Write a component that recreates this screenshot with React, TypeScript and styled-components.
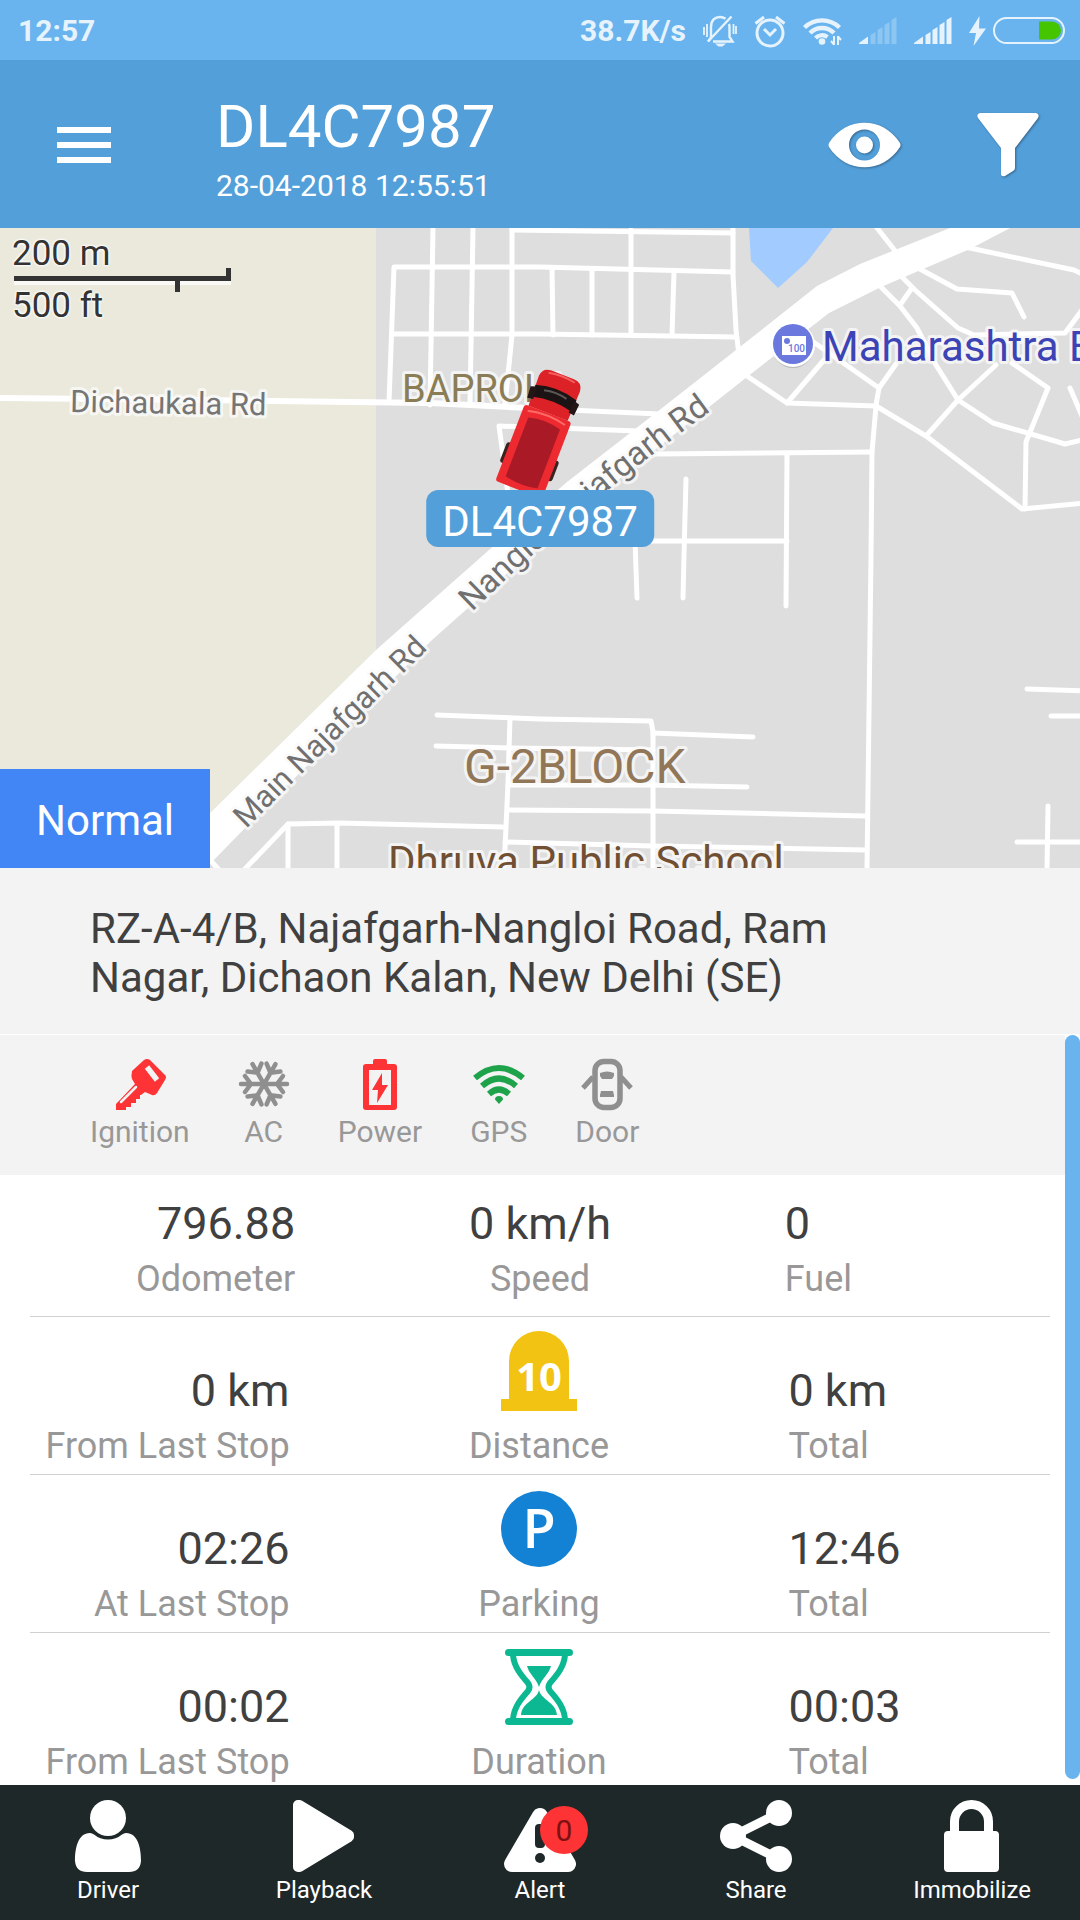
import React from "react";
import styled, { createGlobalStyle } from "styled-components";

const GlobalStyle = createGlobalStyle`
  *, *::before, *::after { box-sizing: border-box; }
  body { margin: 0; background: #ffffff; font-family: Roboto, "Noto Sans", sans-serif; }
  button { margin: 0; padding: 0; border: 0; background: none; color: inherit; font: inherit; cursor: pointer; }
  svg { display: block; flex: none; overflow: visible; }
`;

const Page = styled.div`
  display: flex;
  flex-direction: column;
  min-height: 100vh;
`;

/* ---------- status bar ---------- */

const StatusBar = styled.div`
  display: flex;
  align-items: center;
  justify-content: space-between;
  height: 60px;
  padding: 1px 15px 0 18px;
  background: #69b4ee;
  color: #e6f3fd;
  font-size: 30px;
  font-weight: 700;
  line-height: 36px;
`;

const StatusItems = styled.div`
  display: flex;
  align-items: center;
  gap: 17px;
`;

const PowerItems = styled.div`
  display: flex;
  align-items: center;
  gap: 7px;
`;

const SilentIcon = () => (
  <svg width="34" height="32" viewBox="0 0 34 32" fill="none" stroke="#e6f3fd" strokeWidth="2.4">
    <path d="M8 22.5V12C8 5 12 2 17 2c2 0 4 .6 5.500 1.800M26 9c.4 1 .5 2 .5 3.500V22l3 4.500H10M8 22.500l-3 4" />
    <path d="M28.500 1.500L5 26.500" />
    <path d="M12 28.500h11l-3.500 3h-4z" fill="#e6f3fd" stroke="none" />
    <path d="M1 12v8M4 9v13M30.500 9v10M33 11v8" strokeWidth="1.800" />
  </svg>
);

const AlarmIcon = () => (
  <svg width="32" height="32" viewBox="0 0 32 32" fill="none" stroke="#e6f3fd" strokeWidth="3">
    <circle cx="16" cy="18" r="13" />
    <path d="M10 14l6 6 6-6M1.500 8.500L10 2M30.500 8.500L22 2" />
  </svg>
);

const WifiIcon = () => (
  <svg width="39" height="28" viewBox="0 0 39 28" fill="none" stroke="#e6f3fd" strokeWidth="4.400">
    <path d="M1.500 10.500a25 25 0 0 1 35 0" />
    <path d="M7 16a17 17 0 0 1 24 0" />
    <path d="M12.500 21a9.500 9.500 0 0 1 12-1" />
    <circle cx="19" cy="24.500" r="3.300" fill="#e6f3fd" stroke="none" />
    <path d="M31 19v9M28 24l3 3.500M35 28v-9M38 23l-3-3.500" strokeWidth="2" />
  </svg>
);

const SignalIcon = ({ level }: { level: number }) => (
  <svg width="38" height="26" viewBox="0 0 38 26" fill="#e6f3fd">
    <path d="M0 25l9-6.500V26H0z" />
    {[0, 1, 2, 3].map((bar) => {
      const x = 11.5 + bar * 7;
      const top = 15 - bar * 5;
      return <path key={bar} d={`M${x} ${top + 2}l5-3V26h-5z`} opacity={bar < level ? 1 : 0.3} />;
    })}
  </svg>
);

const ChargeIcon = () => (
  <svg width="17" height="30" viewBox="0 0 17 30" fill="#e6f3fd">
    <path d="M10.500 0L0 17h7L4.500 30 17 12.500h-7z" />
  </svg>
);

const BatteryIcon = () => (
  <svg width="72" height="27" viewBox="0 0 72 27">
    <rect x="1" y="1" width="70" height="25" rx="12.500" fill="none" stroke="#e6f3fd" strokeWidth="2" />
    <path d="M46 4.500h13a9 9 0 0 1 0 18H46z" fill="#45c400" />
  </svg>
);

/* ---------- header ---------- */

const Header = styled.header`
  display: flex;
  align-items: center;
  padding: 26px 41px 24px 57px;
  background: #539fd9;
  color: #ffffff;
`;

const HeaderButton = styled.button`
  display: flex;
  align-items: center;
  min-height: 112px;
`;

const HeaderTitle = styled.div`
  flex: 1;
  min-width: 0;
  margin-left: 105px;
  padding-top: 6px;
`;

const VehicleName = styled.h1`
  margin: 0 0 6px;
  font-size: 60px;
  font-weight: 400;
  line-height: 70px;
`;

const Timestamp = styled.div`
  font-size: 30px;
  line-height: 36px;
`;

const HeaderActions = styled.div`
  display: flex;
  gap: 76px;
`;

const IconShadow = styled.svg`
  filter: drop-shadow(1px 1px 1px rgba(0, 0, 0, 0.35));
`;

/* ---------- map ---------- */

const MapArea = styled.section`
  position: relative;
  flex: 1 0 320px;
  overflow: hidden;
  background: #dedede;
`;

const MapDrawing = styled.svg`
  position: absolute;
  inset: 0;
  width: 100%;
  height: 100%;
  font-family: Roboto, sans-serif;
`;

const MapText = styled.text<{ $size: number; $tone: string }>`
  font-size: ${(p) => p.$size}px;
  fill: ${(p) => p.$tone};
  stroke: rgba(250, 250, 250, 0.8);
  stroke-width: 6px;
  stroke-linejoin: round;
  paint-order: stroke;
`;

const MapScale = styled.div`
  position: absolute;
  top: 5px;
  left: 12px;
  color: #333333;
  font-size: 35px;
  line-height: 42px;
  text-shadow: 0 0 3px #ffffff, 0 0 3px #ffffff, 0 0 3px #ffffff;
`;

const MarkerLabel = styled.button`
  position: absolute;
  top: 41%;
  left: 50%;
  padding: 7px 16px 0;
  border-radius: 12px;
  background: #539fd9;
  color: #ffffff;
  font-size: 42px;
  line-height: 50px;
  transform: translateX(-50%);
`;

const MapMode = styled.button`
  position: absolute;
  bottom: 0;
  left: 0;
  padding: 27px 36px 22px;
  background: #4285f5;
  color: #ffffff;
  font-size: 42px;
  line-height: 50px;
`;

const streets = [
  "M433 228L430 405",
  "M473 228L470 405",
  "M512 228V335L508 375L505 404",
  "M389 402L394 267L540 267L733 272",
  "M393 334H540L735 337",
  "M512 230L733 233",
  "M733 228V275L736 330L739 355",
  "M631 230V335",
  "M552 268L553 335",
  "M592 270V335",
  "M674 272L672 335",
  "M874 224L896 252",
  "M965 247L1074 270L1084 275",
  "M918 268L957 289L1012 293L1024 317",
  "M899 274L915 290L958 328L974 335L1065 333L1082 310",
  "M912 288L900 305",
  "M878 284L900 306L917 328L936 365L958 400L993 423L1065 444L1082 440",
  "M812 341L879 388L876 405",
  "M896 364L879 388",
  "M744 374L787 403L876 406L926 436L1022 509L1084 503",
  "M787 403L824 360",
  "M926 436L958 400L996 365",
  "M1012 363L1048 388L1026 442L1025 509",
  "M1070 388L1082 416",
  "M876 406L872 452L871 555L867 870",
  "M569 410L659 414",
  "M508 495L505 470L499 426L638 431",
  "M655 454L872 452",
  "M686 479L684 555L683 598",
  "M787 455L786 606",
  "M635 540L637 598",
  "M600 541H787",
  "M1027 689L1084 691",
  "M1051 716H1084",
  "M1048 806L1047 870",
  "M1017 842H1084",
  "M437 715L540 719L651 721L653 732V870",
  "M653 733L753 737",
  "M436 746L510 748L653 750",
  "M510 718L508 783L504 870",
  "M508 785L653 785L747 787",
  "M508 810L653 811L865 816",
  "M505 842L653 846L866 850",
  "M244 870L288 824L339 823L503 827",
  "M288 824V870",
  "M337 824V870",
  "M210 860L221 872",
];

const Truck = () => (
  <g transform="translate(547 416) rotate(21)">
    <rect x="-28" y="38" width="8" height="22" rx="3" fill="#3a2320" />
    <rect x="20" y="38" width="8" height="22" rx="3" fill="#3a2320" />
    <rect x="-25" y="-3" width="50" height="82" rx="3" fill="#ed2a30" />
    <path d="M-17 8Q0 3 17 8V71Q0 75-17 71Z" fill="#aa1a26" />
    <path d="M-20 2Q0-3 20 2" stroke="#ff6a66" strokeWidth="2" fill="none" />
    <path d="M-21-3L-22-35Q-21-44-12-44H12Q21-44 22-35L21-3Z" fill="#dc2127" />
    <path d="M-14-41Q0-44 14-41" stroke="#f4605f" strokeWidth="2" fill="none" />
    <path d="M-22-25Q0-32 22-25L20-13Q0-18-20-13Z" fill="#1c1414" />
    <path d="M-26-22l6-2 1 13-6 1zM26-22l-6-2-1 13 6 1z" fill="#241616" />
    <path d="M-12-23Q0-26 12-23" stroke="#5d5858" strokeWidth="2" fill="none" />
  </g>
);

const CityMap = () => (
  <MapDrawing viewBox="0 228 1080 640" preserveAspectRatio="xMidYMid slice" role="img" aria-label="Map around the vehicle">
    <defs>
      <path id="nangloi-road" d="M472 612Q586 500 726 400" />
      <path id="main-road" d="M246 829L440 637" />
    </defs>
    <rect x="0" y="228" width="1080" height="640" fill="#dedede" />
    <path d="M-1000 228H376V650L210 813V870H-1000Z" fill="#eae9dc" />
    <path d="M749 228L751 261L778 288L807 262L833 228Z" fill="#a2cbff" />
    <path d="M-4 398L200 400L430 403L569 410" fill="none" stroke="#ffffff" strokeWidth="6" />
    <g fill="none" stroke="#ffffff" strokeWidth="5" strokeLinecap="round" strokeLinejoin="round">
      {streets.map((street) => (
        <path key={street} d={street} />
      ))}
    </g>
    <path
      d="M955 226L860 264L817 286L736 350L657 412L567 482L489 550L376 650L208 815V866L246 827L432 640L540 544L652 452L747 377L829 313L881 287L970 249L1014 226Z"
      fill="#ffffff"
    />
    <MapText $size={31} $tone="#757575" x="70" y="412" transform="rotate(1 70 412)">Dichaukala Rd</MapText>
    <MapText $size={38} $tone="#8a7d55" x="402" y="402">BAPROLA</MapText>
    <MapText $size={42} $tone="#3c43b5" x="822" y="361">Maharashtra Bank</MapText>
    <MapText $size={48} $tone="#917758" x="464" y="783">G-2BLOCK</MapText>
    <MapText $size={42} $tone="#704f33" x="388" y="876">Dhruva Public School</MapText>
    <MapText $size={33} $tone="#707070">
      <textPath href="#nangloi-road">Nangloi Najafgarh Rd</textPath>
    </MapText>
    <MapText $size={31} $tone="#707070">
      <textPath href="#main-road">Main Najafgarh Rd</textPath>
    </MapText>
    <circle cx="793" cy="347" r="21" fill="#b9b9b9" />
    <circle cx="793" cy="345" r="22" fill="#ffffff" />
    <circle cx="793" cy="344" r="20" fill="#6b79df" />
    <rect x="782" y="336" width="24" height="19" fill="#ffffff" />
    <circle cx="787" cy="341" r="3" fill="#6b79df" />
    <text x="788" y="352" fontSize="10" fontWeight="500" fill="#6b79df">100</text>
    <Truck />
  </MapDrawing>
);

/* ---------- details ---------- */

const Address = styled.address`
  padding: 36px 180px 32px 90px;
  border-bottom: 1px solid #ffffff;
  background: #f3f3f3;
  color: #404040;
  font-size: 42px;
  font-style: normal;
  line-height: 49px;
`;

const Details = styled.section`
  display: grid;
  grid-template-columns: minmax(0, 1fr) 15px;
  background: #ffffff;
`;

const ScrollThumb = styled.div`
  margin-bottom: 6px;
  border-radius: 8px;
  background: #69b4ee;
`;

const Sensors = styled.div`
  display: flex;
  flex-wrap: wrap;
  gap: 48px;
  padding: 24px 24px 25px 90px;
  background: #f3f3f3;
`;

const Sensor = styled.div`
  display: flex;
  flex-direction: column;
  align-items: center;
  gap: 3px;
  color: #999898;
  font-size: 30px;
  line-height: 36px;
`;

const Metrics = styled.div`
  margin: 0 15px 0 30px;
`;

const MetricRow = styled.div<{ $trip?: boolean }>`
  display: grid;
  grid-template-columns: minmax(0, 1fr) ${(p) => (p.$trip ? "49%" : "48%")} minmax(0, 1fr);
  align-items: end;
  padding: ${(p) => (p.$trip ? "14px 2px 5px 0" : "19px 0 14px")};
  border-bottom: 1px solid #d0d0d0;

  &:last-child {
    padding-bottom: 0;
    border-bottom: 0;
  }
`;

const Metric = styled.div<{ $align: "left" | "center" | "right" }>`
  display: flex;
  flex-direction: column;
  align-items: ${(p) => (p.$align === "left" ? "flex-start" : p.$align === "right" ? "flex-end" : "center")};
  gap: 2px;
  white-space: nowrap;
`;

const MetricValue = styled.div`
  color: #404040;
  font-size: 45px;
  line-height: 60px;
`;

const MetricLabel = styled.div`
  color: #999898;
  font-size: 36px;
  line-height: 46px;
`;

const MetricIcon = styled.div`
  height: 90px;
`;

const RED = "#fe3335";
const GREY = "#8f8f8f";

const KeyIcon = () => (
  <svg width="52" height="52" viewBox="0 0 52 52">
    <path
      d="M30 1Q33-1 36 1L51 16Q53 18 51 21L43 34Q41 37 38 36L31 33L27 36H26V40H22V44H17V48H12V51H2V45L21 25L18 20Q17 17 18 12Z"
      fill={RED}
    />
    <path d="M33 8L43 21" stroke="#f3f3f3" strokeWidth="5.500" />
    <path d="M22 28L7 43" stroke="#f3f3f3" strokeWidth="2.500" strokeLinecap="round" />
  </svg>
);

const SnowIcon = () => (
  <svg width="52" height="52" viewBox="-26 -25 52 52" fill="none" stroke={GREY} strokeWidth="4.500" strokeLinecap="round">
    {[0, 60, 120, 180, 240, 300].map((angle) => (
      <path key={angle} d="M0 0H23M13 0L19-8M13 0L19 8" transform={`rotate(${angle})`} />
    ))}
  </svg>
);

const BatteryCellIcon = () => (
  <svg width="52" height="52" viewBox="0 0 52 52">
    <path
      d="M19 5V2Q19 0 21 0H31Q33 0 33 2V5H40Q43 5 43 8V48Q43 51 40 51H12Q9 51 9 48V8Q9 5 12 5ZM15 11V46H37V11Z"
      fill={RED}
      fillRule="evenodd"
    />
    <path d="M28 14L18 31H24L23 44L34 26H28Z" fill={RED} />
  </svg>
);

const GpsIcon = () => (
  <svg width="52" height="52" viewBox="0 0 52 52" fill="none" stroke="#1fa34a" strokeWidth="6">
    <path d="M2 19Q26-1 50 19" />
    <path d="M9 27Q26 12 43 27" />
    <path d="M16 35Q26 26 36 35" />
    <path d="M26 45L22 40.500Q22 37 26 37Q30 37 30 40.500Z" fill="#1fa34a" stroke="none" />
  </svg>
);

const DoorIcon = () => (
  <svg width="52" height="52" viewBox="0 0 52 52">
    <rect x="14" y="2.500" width="25" height="46" rx="9" fill="none" stroke={GREY} strokeWidth="5.500" />
    <path d="M19 14Q26 11 33 14V17L31 20H21L19 17ZM20 32H32L33 36V38H19V36Z" fill={GREY} />
    <path d="M12 18L2 29M40 18L50 29" stroke={GREY} strokeWidth="5" />
  </svg>
);

const MilestoneIcon = () => (
  <svg width="80" height="80" viewBox="0 0 80 80">
    <path d="M10 68V30A30 30 0 0 1 70 30V68H78V80H2V68Z" fill="#f2c313" />
    <text x="40" y="60" textAnchor="middle" fontFamily="Open Sans, sans-serif" fontWeight="700" fontSize="40" fill="#ffffff">10</text>
  </svg>
);

const ParkingIcon = () => (
  <svg width="80" height="80" viewBox="0 0 80 80">
    <circle cx="40" cy="40" r="38" fill="#1482d4" />
    <text x="40" y="59" textAnchor="middle" fontFamily="Open Sans, sans-serif" fontWeight="600" fontSize="54" fill="#ffffff">P</text>
  </svg>
);

const HourglassIcon = () => (
  <svg width="80" height="80" viewBox="0 0 80 80">
    <g fill="none" stroke="#0cb891" strokeWidth="6">
      <path d="M14 8C15 20 22 28 29 36Q32 40 29 44C22 52 15 60 14 72" />
      <path d="M66 8C65 20 58 28 51 36Q48 40 51 44C58 52 65 60 66 72" />
      <path d="M9.500 5.500H70.500M9.500 74.500H70.500" strokeWidth="7" strokeLinecap="round" />
    </g>
    <path d="M28 19H52C50 27 43 31 40 40C37 31 30 27 28 19Z" fill="#0cb891" />
    <path d="M40 43C42 53 57 55 58 68H22C23 55 38 53 40 43Z" fill="#0cb891" />
  </svg>
);

const sensors = [
  { label: "Ignition", Icon: KeyIcon },
  { label: "AC", Icon: SnowIcon },
  { label: "Power", Icon: BatteryCellIcon },
  { label: "GPS", Icon: GpsIcon },
  { label: "Door", Icon: DoorIcon },
];

const trips = [
  { name: "Distance", Icon: MilestoneIcon, value: "0 km", caption: "From Last Stop", total: "0 km" },
  { name: "Parking", Icon: ParkingIcon, value: "02:26", caption: "At Last Stop", total: "12:46" },
  { name: "Duration", Icon: HourglassIcon, value: "00:02", caption: "From Last Stop", total: "00:03" },
];

/* ---------- bottom bar ---------- */

const BottomBar = styled.nav`
  display: grid;
  grid-template-columns: repeat(5, minmax(0, 1fr));
  background: #1e2829;
  color: #ffffff;
`;

const Tab = styled.button`
  display: flex;
  flex-direction: column;
  align-items: center;
  gap: 3px;
  padding: 15px 0;
  font-size: 24px;
  line-height: 30px;
`;

const TabIcon = styled.span`
  position: relative;
  display: block;
`;

const Badge = styled.span`
  position: absolute;
  top: 6px;
  right: -12px;
  width: 48px;
  height: 48px;
  border-radius: 50%;
  background: #fe3335;
  color: #7d1012;
  font-size: 30px;
  line-height: 50px;
  text-align: center;
`;

const DriverIcon = () => (
  <svg width="72" height="72" viewBox="0 0 72 72" fill="#ffffff">
    <circle cx="36" cy="18" r="18" />
    <path d="M18 33Q20 33 22 34.500Q28 39.500 36 39.500Q44 39.500 50 34.500Q52 33 54 33C66 33 69 48 69 61Q68 72 57 72H15Q4 72 3 61C3 48 6 33 18 33Z" />
  </svg>
);

const PlayIcon = () => (
  <svg width="72" height="72" viewBox="0 0 72 72" fill="#ffffff" stroke="#ffffff" strokeWidth="10" strokeLinejoin="round">
    <path d="M10 5H11.500L61 35V37L11.500 67H10Z" />
  </svg>
);

const AlertIcon = () => (
  <svg width="72" height="72" viewBox="0 0 72 72">
    <path d="M36 16L64 64H8Z" fill="#ffffff" stroke="#ffffff" strokeWidth="16" strokeLinejoin="round" />
    <rect x="31" y="24" width="10" height="24" rx="4" fill="#1e2829" />
    <circle cx="36" cy="58" r="5" fill="#1e2829" />
  </svg>
);

const ShareIcon = () => (
  <svg width="72" height="72" viewBox="0 0 72 72" fill="#ffffff">
    <path d="M59 13L13 36L59 59" fill="none" stroke="#ffffff" strokeWidth="9" />
    <circle cx="13" cy="36" r="13" />
    <circle cx="59" cy="13" r="13" />
    <circle cx="59" cy="59" r="13" />
  </svg>
);

const LockIcon = () => (
  <svg width="72" height="72" viewBox="0 0 72 72" fill="#ffffff">
    <path d="M18.500 34V21.500A17 17 0 0 1 52.500 21.500V34" fill="none" stroke="#ffffff" strokeWidth="9" />
    <rect x="8" y="31" width="55" height="41" rx="4" />
  </svg>
);

const tabs = [
  { label: "Driver", Icon: DriverIcon },
  { label: "Playback", Icon: PlayIcon },
  { label: "Alert", Icon: AlertIcon, badge: "0" },
  { label: "Share", Icon: ShareIcon },
  { label: "Immobilize", Icon: LockIcon },
];

export default function App() {
  return (
    <Page>
      <GlobalStyle />
      <StatusBar>
        <span>12:57</span>
        <StatusItems>
          <span>38.7K/s</span>
          <SilentIcon />
          <AlarmIcon />
          <WifiIcon />
          <SignalIcon level={0} />
          <SignalIcon level={4} />
          <PowerItems>
            <ChargeIcon />
            <BatteryIcon />
          </PowerItems>
        </StatusItems>
      </StatusBar>

      <Header>
        <HeaderButton aria-label="Menu">
          <svg width="54" height="36" viewBox="0 0 54 36" fill="#ffffff">
            <path d="M0 0H54V6H0ZM0 15H54V21H0ZM0 30H54V36H0Z" />
          </svg>
        </HeaderButton>
        <HeaderTitle>
          <VehicleName>DL4C7987</VehicleName>
          <Timestamp>28-04-2018 12:55:51</Timestamp>
        </HeaderTitle>
        <HeaderActions>
          <HeaderButton aria-label="View">
            <IconShadow width="73" height="46" viewBox="0 0 73 46" fill="#ffffff">
              <path
                d="M1 21C18-6 55-6 72 21Q73 23 72 25C55 52 18 52 1 25Q0 23 1 21ZM36.500 7.500A15.500 15.500 0 1 0 36.500 38.500A15.500 15.500 0 1 0 36.500 7.500Z"
                fillRule="evenodd"
              />
              <circle cx="36.500" cy="23" r="8.500" />
            </IconShadow>
          </HeaderButton>
          <HeaderButton aria-label="Filter">
            <IconShadow width="62" height="64" viewBox="0 0 62 64" fill="#ffffff">
              <path d="M3 0H59Q63 1 61 5L38 35V55Q38 57 36 58L28 63Q24 64 24 61V35L1 5Q-1 1 3 0Z" />
            </IconShadow>
          </HeaderButton>
        </HeaderActions>
      </Header>

      <MapArea>
        <CityMap />
        <MapScale>
          <div>200 m</div>
          <svg width="219" height="10" viewBox="0 0 219 10" fill="#333333">
            <path d="M2 6H219V10H2Z" fill="#ffffff" opacity="0.7" />
            <path d="M2 1H214V-7H219V6H168V17H163V6H2Z" />
          </svg>
          <div>500 ft</div>
        </MapScale>
        <MarkerLabel>DL4C7987</MarkerLabel>
        <MapMode>Normal</MapMode>
      </MapArea>

      <Address>RZ-A-4/B, Najafgarh-Nangloi Road, Ram Nagar, Dichaon Kalan, New Delhi (SE)</Address>

      <Details>
        <div>
          <Sensors>
            {sensors.map(({ label, Icon }) => (
              <Sensor key={label}>
                <Icon />
                <span>{label}</span>
              </Sensor>
            ))}
          </Sensors>
          <Metrics>
            <MetricRow>
              <Metric $align="right">
                <MetricValue>796.88</MetricValue>
                <MetricLabel>Odometer</MetricLabel>
              </Metric>
              <Metric $align="center">
                <MetricValue>0 km/h</MetricValue>
                <MetricLabel>Speed</MetricLabel>
              </Metric>
              <Metric $align="left">
                <MetricValue>0</MetricValue>
                <MetricLabel>Fuel</MetricLabel>
              </Metric>
            </MetricRow>
            {trips.map(({ name, Icon, value, caption, total }) => (
              <MetricRow key={name} $trip>
                <Metric $align="right">
                  <MetricValue>{value}</MetricValue>
                  <MetricLabel>{caption}</MetricLabel>
                </Metric>
                <Metric $align="center">
                  <MetricIcon>
                    <Icon />
                  </MetricIcon>
                  <MetricLabel>{name}</MetricLabel>
                </Metric>
                <Metric $align="left">
                  <MetricValue>{total}</MetricValue>
                  <MetricLabel>Total</MetricLabel>
                </Metric>
              </MetricRow>
            ))}
          </Metrics>
        </div>
        <ScrollThumb />
      </Details>

      <BottomBar>
        {tabs.map(({ label, Icon, badge }) => (
          <Tab key={label}>
            <TabIcon>
              <Icon />
              {badge && <Badge>{badge}</Badge>}
            </TabIcon>
            <span>{label}</span>
          </Tab>
        ))}
      </BottomBar>
    </Page>
  );
}
